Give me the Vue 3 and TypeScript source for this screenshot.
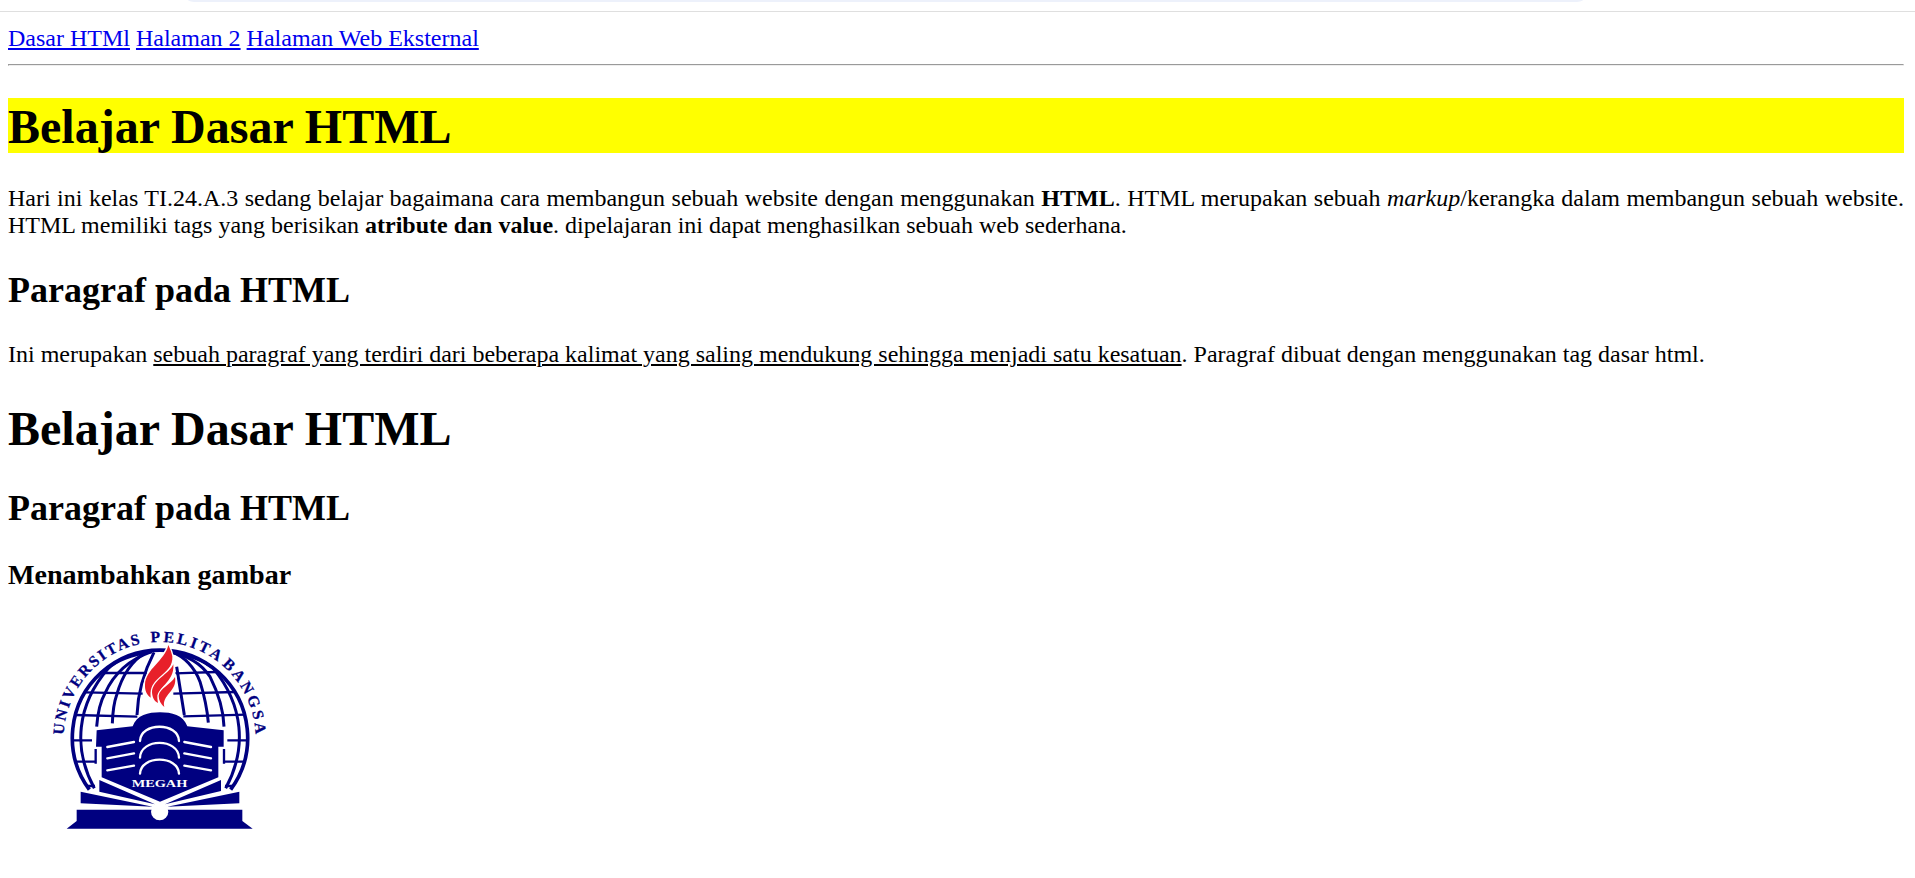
<script setup lang="ts">
interface NavLink {
  label: string
  href: string
}

const links: NavLink[] = [
  { label: 'Dasar HTMl', href: '#dasar' },
  { label: 'Halaman 2', href: '#halaman-2' },
  { label: 'Halaman Web Eksternal', href: '#eksternal' },
]
</script>

<template>
  <div class="page">
    <div class="toolbar"><div class="address"></div></div>
    <main class="content">
      <nav class="links">
        <template v-for="link in links" :key="link.href"><a :href="link.href">{{ link.label }}</a>{{ ' ' }}</template>
      </nav>
      <hr />
      <h1 class="marked">Belajar Dasar HTML</h1>
      <p class="justified">
        Hari ini kelas TI.24.A.3 sedang belajar bagaimana cara membangun sebuah website dengan menggunakan
        <b>HTML</b>. HTML merupakan sebuah <i>markup</i>/kerangka dalam membangun sebuah website. HTML memiliki tags
        yang berisikan <b>atribute dan value</b>. dipelajaran ini dapat menghasilkan sebuah web sederhana.
      </p>
      <h2>Paragraf pada HTML</h2>
      <p>
        Ini merupakan <u>sebuah paragraf yang terdiri dari beberapa kalimat yang saling mendukung sehingga menjadi satu
        kesatuan</u>. Paragraf dibuat dengan menggunakan tag dasar html.
      </p>
      <h1>Belajar Dasar HTML</h1>
      <h2>Paragraf pada HTML</h2>
      <h3>Menambahkan gambar</h3>
      <svg class="logo" viewBox="0 0 720 720" role="img" aria-label="Universitas Pelita Bangsa">
        <defs>
          <path id="ring" d="M71 371A288 290 0 0 1 647 371" />
        </defs>
        <g class="motto">
          <text textLength="385"><textPath href="#ring" startOffset="11">UNIVERSITAS</textPath></text>
          <text textLength="214"><textPath href="#ring" startOffset="427">PELITA</textPath></text>
          <text textLength="238"><textPath href="#ring" startOffset="656">BANGSA</textPath></text>
        </g>
        <g class="globe">
          <path class="rim" d="M148 524A263 263 0 1 1 572 524" />
          <path d="M163 520C98 400 110 270 205 160Q240 125 335 110M557 520C622 400 610 270 520 160Q480 125 385 110" />
          <path d="M170 335Q175 270 195 235Q235 145 335 110M552 335Q550 265 510 185Q470 125 385 110" />
          <path d="M217 325Q219 270 230 240Q255 150 318 112M505 323Q500 265 480 200Q455 135 395 110" />
          <path d="M291 300Q294 205 342 112M433 300L410 155" />
          <path class="thin" d="M190 174L320 174M406 175L528 171M135 232L308 236M400 236L585 231M105 300L292 305M430 304L618 299" />
          <path class="thin" d="M98 376H156M562 376H626M106 440H167M167 402V446M614 440H552M552 402V446M140 513H165M580 513H555" />
        </g>
        <g class="flame">
          <path d="M385 90C374 138 317 162 315 208C314 226 320 240 332 248C326 192 401 178 397 124Q394 108 385 90Z" />
          <path d="M400 148C388 177 337 195 336 232C337 249 344 260 354 264C344 213 405 206 400 148Z" />
          <path d="M405 186C392 209 359 220 356 242Q356 261 373 276C364 240 413 228 405 186Z" />
        </g>
        <g class="navy">
          <path d="M170 346L278 334C290 300 325 292 360 292S430 300 442 334L551 346V395H535V487L360 560L185 487V395H168Z" />
          <path d="M178 495L345 568L178 530ZM543 495L375 568L543 528Z" />
          <path d="M122 530L338 575L122 565ZM598 530L382 575L598 565Z" />
          <path d="M110 584H607V618L638 641H80L110 618Z" />
        </g>
        <g class="lines">
          <path d="M300 378C302 321 415 321 417 378M300 428C302 369 415 369 417 428M300 476C302 420 415 420 417 476" />
          <path d="M202 396L282 381M202 430L282 415M202 466L282 452M513 396L433 381M513 430L433 415M513 466L433 452" />
        </g>
        <circle cx="359" cy="590" r="26" fill="#fff" />
        <text class="megah" x="275" y="515" textLength="167" lengthAdjust="spacingAndGlyphs">MEGAH</text>
      </svg>
    </main>
  </div>
</template>

<style>
body {
  margin: 0;
  background: #fff;
}
</style>

<style scoped>
.page {
  height: 878px;
  overflow: hidden;
  color: #000;
  font: 24px/27px "Liberation Serif", "Times New Roman", serif;
}
.toolbar {
  box-sizing: border-box;
  height: 12px;
  padding: 0 332px 0 188px;
  border-bottom: 1px solid #dfdfdf;
}
.address {
  height: 2px;
  background: #edf1fb;
  border-radius: 0 0 10px 10px / 0 0 2px 2px;
}
.content {
  padding: 12px 11px 0 8px;
}
.links {
  height: 28px;
  line-height: 29px;
}
a {
  color: #00e;
}
a,
u {
  text-decoration: underline;
  text-decoration-thickness: 2px;
  text-underline-offset: 2px;
}
hr {
  height: 0;
  margin: 12px 0 32px;
  border: 1px solid;
  border-color: #9a9a9a #eee #eee #9a9a9a;
}
h1 {
  margin: 32px 0;
  padding-top: 2px;
  font-size: 48px;
  line-height: 53px;
}
h2 {
  margin: 30px 0;
  padding-top: 1px;
  font-size: 36px;
  line-height: 41px;
}
h3 {
  margin: 30px 0 24px;
  font-size: 28.08px;
  line-height: 32px;
}
p {
  margin: 24px 0;
}
.marked {
  background: #ff0;
}
.justified {
  text-align: justify;
}
.logo {
  display: block;
  width: 240px;
  height: 240px;
  margin-left: 32px;
}
.motto,
.megah {
  fill: #000080;
  font-family: "Liberation Serif", serif;
  font-weight: bold;
}
.motto {
  font-size: 47px;
  stroke: #000080;
  stroke-width: 0.8;
}
.megah {
  fill: #fff;
  font-size: 34px;
}
.globe {
  fill: none;
  stroke: #000080;
  stroke-width: 9;
}
.rim {
  stroke-width: 11;
}
.thin {
  stroke-width: 7;
}
.flame path {
  fill: #e8202a;
  stroke: #fff;
  stroke-width: 8;
  paint-order: stroke;
}
.navy {
  fill: #000080;
}
.lines {
  fill: none;
  stroke: #fff;
  stroke-width: 7;
  stroke-linecap: round;
}
</style>
